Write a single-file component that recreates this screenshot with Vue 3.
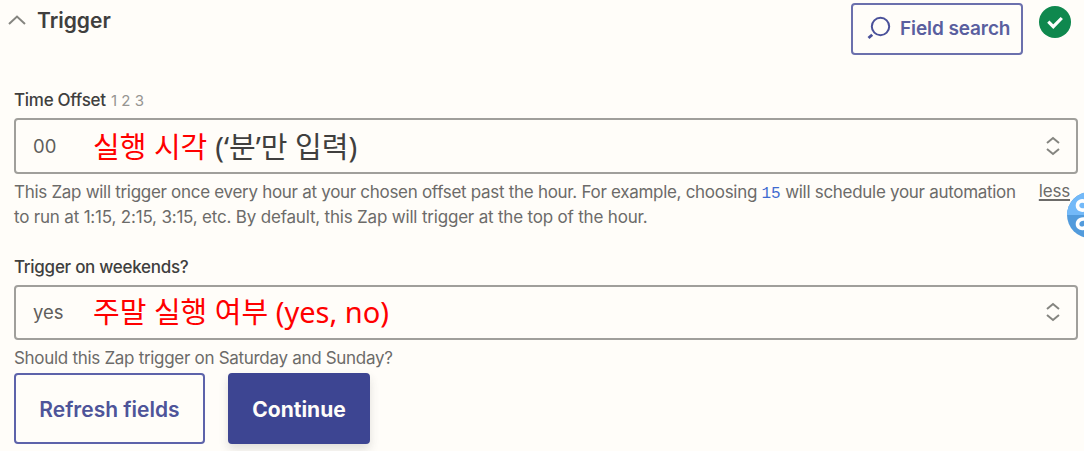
<template>
  <main class="panel">
    <header class="panel-header">
      <button class="section-toggle" type="button" @click="open = !open">
        <svg class="caret" viewBox="0 0 18 10" fill="none">
          <path d="M1 9 9 1.5 17 9" stroke="#858580" stroke-width="2" />
        </svg>
        <span class="section-title">Trigger</span>
      </button>

      <div class="header-actions">
        <button class="search-button" type="button">
          <svg class="search-icon" viewBox="0 0 24 24" fill="none">
            <circle cx="13.5" cy="10.500" r="8.7" stroke="#4a519a" stroke-width="2" />
            <path d="M5.2 18.7 1.5 22" stroke="#4a519a" stroke-width="2.8" />
          </svg>
          <span>Field search</span>
        </button>
        <svg class="status" viewBox="0 0 32 32" fill="none">
          <circle cx="16" cy="16" r="16" fill="#0f884e" />
          <path d="m9.3 15.7 5 5 8.5-8.7" stroke="#fff" stroke-width="3.2" />
        </svg>
      </div>
    </header>

    <section v-if="open" class="fields">
      <div v-for="field in fields" :key="field.id" class="field">
        <label class="field-label">
          {{ field.label }} <span v-if="field.type" class="field-type">{{ field.type }}</span>
        </label>
        <div class="select">
          <span class="value" :class="field.id">{{ field.value }}</span>
          <span class="note" :class="field.id">
            <em>{{ field.note }}</em><span v-if="field.hint" class="hint">{{ field.hint }}</span>
          </span>
          <svg class="arrows" viewBox="0 0 14 20" fill="none">
            <path d="m1 7 6-5 6 5M1 13l6 5 6-5" stroke="#858580" stroke-width="2" />
          </svg>
        </div>

        <div v-if="field.id === 'offset'" class="help">
          <p>
            <span class="line first">This Zap will trigger once every hour at your chosen offset past the hour. For example, choosing <code>15</code> will schedule your automation</span>
            <span class="line second">to run at 1:15, 2:15, 3:15, etc. By default, this Zap will trigger at the top of the hour.</span>
          </p>
          <a class="less">less</a>
        </div>
        <div v-else class="help">
          <p><span class="line third">Should this Zap trigger on Saturday and Sunday?</span></p>
        </div>
      </div>

      <div class="buttons">
        <button class="btn refresh" type="button">Refresh fields</button>
        <button class="btn continue" type="button">Continue</button>
      </div>
    </section>

    <!-- floating helper badge, cut off by the window edge -->
    <svg class="badge" viewBox="0 0 46 46" fill="none">
      <circle cx="23" cy="23" r="23" fill="#529bdc" />
      <path d="M0 23a23 23 0 0 1 46 0z" fill="#73b9f8" />
      <g stroke="#fff" stroke-width="3.6">
        <path d="M19 10c-4.500-2.500-8.500-.5-8.500 3.500s4.500 6 9.500 3.500" />
        <path d="M20 28c-5-2.500-9.500 0-9.500 4s5 6 8 2.800" />
      </g>
    </svg>
  </main>
</template>

<script setup>
import { ref } from 'vue';

const open = ref(true);

const fields = [
  {
    id: 'offset',
    label: 'Time Offset',
    type: '1 2 3',
    value: '00',
    note: '실행 시각',
    hint: '(‘분’만 입력)',
  },
  {
    id: 'weekends',
    label: 'Trigger on weekends?',
    value: 'yes',
    note: '주말 실행 여부 (yes, no)',
  },
];
</script>

<style>
body {
  background: #fffdf9;
}
</style>

<style scoped>
.panel {
  position: relative;
  box-sizing: border-box;
  height: 451px;
  padding: 0 6px 0 14px;
  overflow: hidden;
  font-family: Inter, "Noto Sans CJK KR", sans-serif;
  color: #403f3e;
  white-space: nowrap;
}

button {
  font-family: inherit;
  padding: 0;
  background: none;
}

.panel-header {
  display: flex;
  justify-content: space-between;
  height: 87px;
}

.section-toggle {
  display: flex;
  align-items: center;
  align-self: flex-start;
  gap: 11px;
  height: 40px;
  margin-left: -6px;
  border: 0;
  color: #403f3e;
}

.caret {
  width: 18px;
  height: 10px;
}

.section-title {
  font-size: 21px;
  font-weight: 600;
}

.header-actions {
  display: flex;
  align-items: flex-start;
  gap: 16px;
  padding: 3px 7px 0 0;
}

.search-button {
  display: flex;
  align-items: center;
  gap: 9px;
  box-sizing: border-box;
  width: 172px;
  height: 52px;
  padding: 0 0 2px 14px;
  border: 2px solid #6b70ad;
  border-radius: 4px;
  font-size: 19px;
  font-weight: 600;
  letter-spacing: -0.1px;
  color: #5a5f9f;
}

.search-icon {
  width: 24px;
  height: 24px;
}

.status {
  width: 32px;
  height: 32px;
  margin-top: 3px;
}

.field {
  height: 167px;
}

.field + .field {
  height: 119px;
}

.field-label {
  display: block;
  height: 31px;
  line-height: 27px;
  font-size: 17px;
  font-weight: 500;
  letter-spacing: -0.28px;
}

.field-type {
  margin-left: 1px;
  font-size: 15px;
  font-weight: 400;
  letter-spacing: 0;
  color: #969592;
}

.select {
  display: flex;
  align-items: center;
  box-sizing: border-box;
  height: 56px;
  padding: 0 16px 0 17px;
  border: 2px solid #a09f9b;
  border-radius: 4px;
}

.field + .field .select {
  height: 55px;
}

.value {
  width: 60px;
  font-size: 18.5px;
  color: #5f5e5c;
}

.value.weekends {
  padding-bottom: 2px;
}

.note {
  flex: 1;
  font-family: "Noto Sans", "Noto Sans CJK KR", sans-serif;
  font-size: 29px;
  line-height: 40px;
  color: #403f3e;
}

.note.offset {
  padding-top: 1px;
}

.note.weekends {
  padding-bottom: 2px;
}

.note em {
  font-style: normal;
  color: #f00;
}

.hint {
  margin-left: 8px;
}

.arrows {
  width: 14px;
  height: 20px;
}

.field + .field .arrows {
  margin-bottom: 1px;
}

.help {
  display: flex;
  justify-content: space-between;
  padding: 6px 8px 0 0;
  font-size: 17px;
  line-height: 25px;
  color: #6c6b69;
}

.help p {
  margin: 0;
}

.line {
  display: block;
  width: max-content;
  height: 25px;
}

.first {
  letter-spacing: -0.297px;
}

.second {
  letter-spacing: -0.19px;
}

.third {
  letter-spacing: -0.3px;
}

.help code {
  font-family: "Liberation Mono", monospace;
  font-size: 16px;
  line-height: 1;
  letter-spacing: 0;
  color: #3f6bd0;
}

.less {
  height: 23px;
  line-height: 22px;
  letter-spacing: -0.2px;
  text-decoration: underline;
  text-decoration-thickness: 1.5px;
  text-underline-offset: 2px;
}

.buttons {
  display: flex;
  gap: 23px;
}

.btn {
  box-sizing: border-box;
  height: 71px;
  padding-top: 1px;
  border: 2px solid #5d63aa;
  border-radius: 4px;
  font-size: 21px;
  font-weight: 600;
  color: #4e5499;
}

.refresh {
  width: 191px;
}

.continue {
  width: 142px;
  border-color: #3d4592;
  background: #3d4592;
  box-shadow: 0 5px 10px rgba(60, 60, 60, 0.16);
  font-weight: 700;
  color: #fffdf9;
}

.badge {
  position: absolute;
  top: 192px;
  left: 1067px;
  width: 46px;
  height: 46px;
}
</style>
